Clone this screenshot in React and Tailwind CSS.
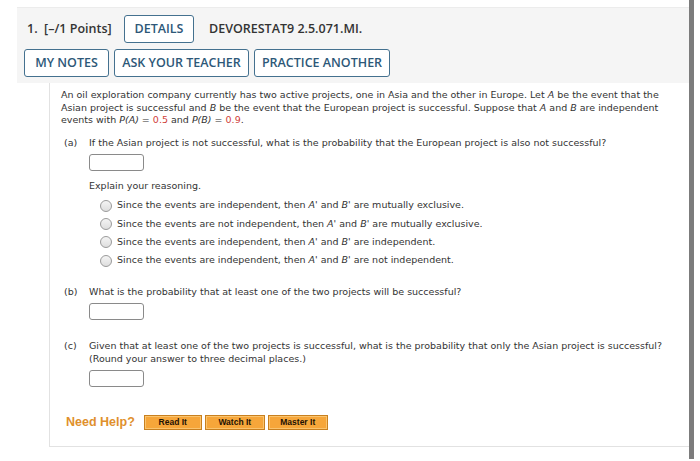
import React from "react";

function HeadBtn({ children, w }) {
	return (
		<div
			className={`h-[28px] ${w} flex items-center justify-center border-[1.5px] border-[#44718f] rounded-[3px] bg-white text-[#2d5878] text-[12.5px] font-semibold`}
		>
			{children}
		</div>
	);
}

function AnswerBox() {
	return <div className="w-[55px] h-[17px] border border-[#8a8a8a] rounded-[3px] bg-white" />;
}

function Radio({ children }) {
	return (
		<li className="flex items-center h-[18.3px]">
			<span className="w-[12px] h-[12px] rounded-full border border-[#9a9a9a] bg-gradient-to-b from-[#f4f4f4] to-[#dedede] mr-[5px]" />
			<span>{children}</span>
		</li>
	);
}

function HelpBtn({ children, w }) {
	return (
		<div
			className={`h-[15px] ${w} flex items-center justify-center bg-[#f6a63a] border border-[#c8801f] shadow-[inset_0_0_0_1px_#fbc46e] text-[8.5px] font-bold text-[#1e1204] font-['Liberation_Sans',Arial,sans-serif]`}
		>
			{children}
		</div>
	);
}

export default function App() {
	return (
		<div className="w-[700px] h-[461px] bg-white flex overflow-hidden">
			<div className="w-[689px] pt-[7px] pl-[17px]">
				{/* header */}
				<div className="h-[76px] bg-[#f5f5f5] border-t border-[#ececec] pt-[7px] flex flex-col gap-[6px] font-['Open_Sans',sans-serif]">
					<div className="flex items-center pl-[10px] text-[#333] text-[12.5px] font-semibold">
						<span className="w-[97px]">1.&nbsp; [–/1 Points]</span>
						<HeadBtn w="w-[70px]">DETAILS</HeadBtn>
						<span className="ml-[15px]">DEVORESTAT9 2.5.071.MI.</span>
					</div>
					<div className="flex items-center pl-[7px] gap-[5px]">
						<HeadBtn w="w-[85px]">MY NOTES</HeadBtn>
						<HeadBtn w="w-[135px]">ASK YOUR TEACHER</HeadBtn>
						<HeadBtn w="w-[136px]">PRACTICE ANOTHER</HeadBtn>
					</div>
				</div>

				{/* question body */}
				<div className="ml-[32px] h-[364px] border-l border-b border-[#e2e2e2] pl-[11px] pt-[6px] text-[#333] text-[9.5px] leading-[12.5px] font-['DejaVu_Sans',Verdana,sans-serif]">
					<p className="w-[600px]">
						An oil exploration company currently has two active projects, one in Asia and the other in Europe. Let{" "}
						<i>A</i> be the event that the Asian project is successful and <i>B</i> be the event that the European
						project is successful. Suppose that <i>A</i> and <i>B</i> are independent events with <i>P(A)</i> ={" "}
						<span className="text-[#d0413a]">0.5</span> and <i>P(B)</i> ={" "}
						<span className="text-[#d0413a]">0.9</span>.
					</p>

					<div className="flex mt-[10px]">
						<span className="w-[28px] pl-[3px]">(a)</span>
						<div className="flex flex-col">
							<span>If the Asian project is not successful, what is the probability that the European project is also not successful?</span>
							<div className="mt-[5px]">
								<AnswerBox />
							</div>
							<p className="mt-[9px]">Explain your reasoning.</p>
							<ul className="mt-[4px] ml-[11px] flex flex-col">
								<Radio>
									Since the events are independent, then <i>A'</i> and <i>B'</i> are mutually exclusive.
								</Radio>
								<Radio>
									Since the events are not independent, then <i>A'</i> and <i>B'</i> are mutually exclusive.
								</Radio>
								<Radio>
									Since the events are independent, then <i>A'</i> and <i>B'</i> are independent.
								</Radio>
								<Radio>
									Since the events are independent, then <i>A'</i> and <i>B'</i> are not independent.
								</Radio>
							</ul>
						</div>
					</div>

					<div className="flex mt-[16px]">
						<span className="w-[28px] pl-[3px]">(b)</span>
						<div className="flex flex-col">
							<span>What is the probability that at least one of the two projects will be successful?</span>
							<div className="mt-[5px]">
								<AnswerBox />
							</div>
						</div>
					</div>

					<div className="flex mt-[20px]">
						<span className="w-[28px] pl-[3px]">(c)</span>
						<div className="flex flex-col">
							<span>
								Given that at least one of the two projects is successful, what is the probability that only the Asian
								project is successful?
							</span>
							<span>(Round your answer to three decimal places.)</span>
							<div className="mt-[5px]">
								<AnswerBox />
							</div>
						</div>
					</div>

					<div className="flex items-center mt-[28px] pl-[5px]">
						<span className="text-[12.5px] font-bold text-[#e0902c] mr-[9px] font-['Liberation_Sans',Arial,sans-serif]">
							Need Help?
						</span>
						<div className="flex gap-[3px]">
							<HelpBtn w="w-[58px]">Read It</HelpBtn>
							<HelpBtn w="w-[60px]">Watch It</HelpBtn>
							<HelpBtn w="w-[60px]">Master It</HelpBtn>
						</div>
					</div>
				</div>
			</div>
			<div className="w-[5px] h-[459px] bg-[#7c7c7c]" />
		</div>
	);
}
